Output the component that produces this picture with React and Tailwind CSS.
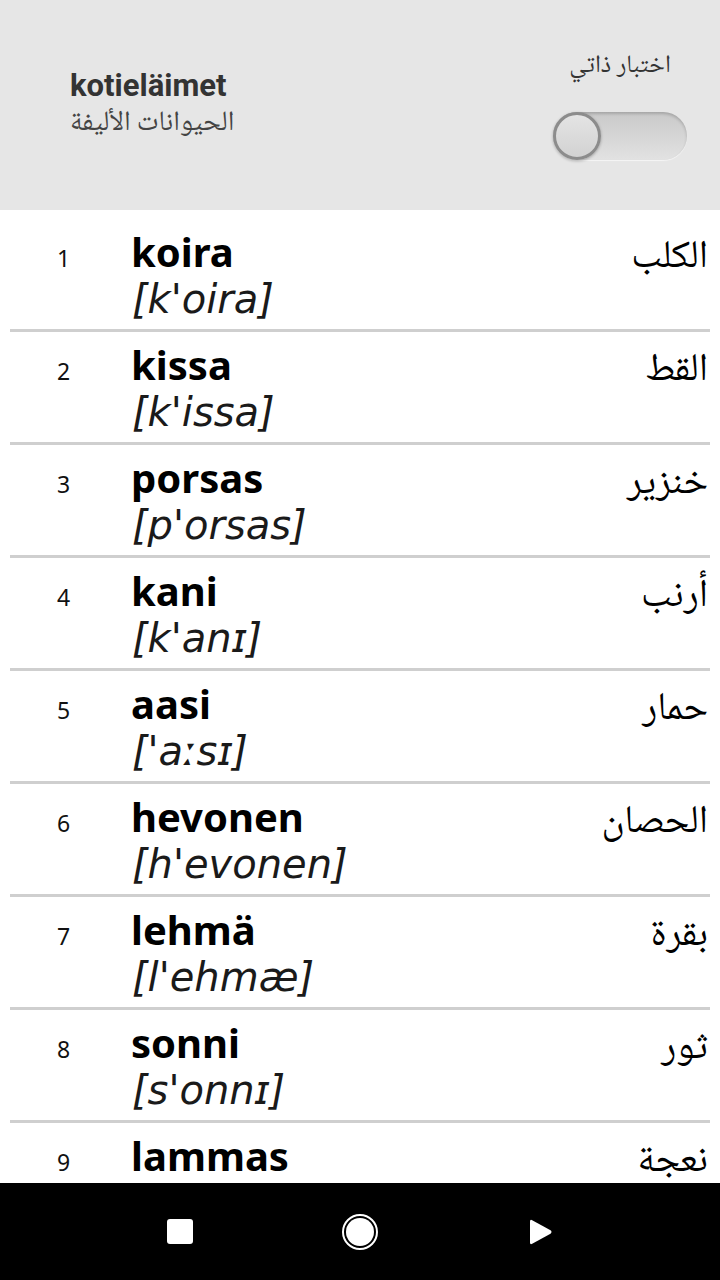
import React from 'react';

const words = [
    { n: 1, fi: 'koira', ipa: "[k'oira]", ar: 'الكلب' },
    { n: 2, fi: 'kissa', ipa: "[k'issa]", ar: 'القط' },
    { n: 3, fi: 'porsas', ipa: "[p'orsas]", ar: 'خنزير' },
    { n: 4, fi: 'kani', ipa: "[k'anɪ]", ar: 'أرنب' },
    { n: 5, fi: 'aasi', ipa: "['aːsɪ]", ar: 'حمار' },
    { n: 6, fi: 'hevonen', ipa: "[h'evonen]", ar: 'الحصان' },
    { n: 7, fi: 'lehmä', ipa: "[l'ehmæ]", ar: 'بقرة' },
    { n: 8, fi: 'sonni', ipa: "[s'onnɪ]", ar: 'ثور' },
    { n: 9, fi: 'lammas', ipa: "[l'ammas]", ar: 'نعجة' },
];

const arabicFont = "font-['Noto_Naskh_Arabic','Noto_Sans_Arabic','DejaVu_Sans',sans-serif]";

const WordRow = ({ item }) => (
    <div className="mx-[10px] border-b-[3px] border-[#cfcfcf] pt-[11px] pb-[8px]">
        <div className="flex h-[44px] items-baseline">
            <span className="w-[121px] pl-[47px] text-[23px] leading-[44px] text-[#111] font-['Noto_Sans',sans-serif]">
                {item.n}
            </span>
            <span className="flex-1 text-[40px] leading-[44px] font-bold text-black font-['Noto_Sans',sans-serif]">
                {item.fi}
            </span>
            <span dir="rtl" className={`pr-[2px] text-[39px] leading-[44px] text-black ${arabicFont}`}>
                {item.ar}
            </span>
        </div>
        <div className="h-[47px] pt-[3px] pl-[122px] text-[40px] leading-[44px] italic text-[#1a1a1a] font-['DejaVu_Sans',sans-serif]">
            {item.ipa}
        </div>
    </div>
);

const Toggle = () => (
    <div className="relative h-[48px] w-[134px] rounded-full bg-gradient-to-b from-[#c9c9c9] to-[#e2e2e2] shadow-[inset_0_2px_3px_rgba(0,0,0,0.18),0_1px_1px_rgba(255,255,255,0.6)]">
        <div className="absolute left-0 top-0 h-[48px] w-[48px] rounded-full border-[3px] border-[#8c8c8c] bg-gradient-to-b from-[#e4e4e4] to-[#d2d2d2] shadow-[0_1px_3px_rgba(0,0,0,0.3)]" />
    </div>
);

const NavBar = () => (
    <div className="flex h-[97px] shrink-0 items-center justify-center bg-black">
        <div className="flex w-[180px] justify-center">
            <div className="h-[25px] w-[26px] rounded-[3px] bg-white" />
        </div>
        <div className="flex w-[180px] justify-center">
            <div className="rounded-full border-2 border-white p-[2px]">
                <div className="h-[28px] w-[28px] rounded-full bg-white" />
            </div>
        </div>
        <div className="flex w-[180px] justify-center">
            <svg width="25" height="28" viewBox="0 0 25 28">
                <path d="M2 3.5 Q2 1 4.2 2.2 L22.5 12.3 Q24.5 14 22.5 15.7 L4.2 25.8 Q2 27 2 24.5 Z" fill="#fff" />
            </svg>
        </div>
    </div>
);

export default function App() {
    return (
        <div className="flex h-[1280px] w-[720px] flex-col overflow-hidden bg-white">
            {/* Header */}
            <div className="flex h-[210px] shrink-0 items-center justify-between bg-[#e6e6e6] pl-[70px] pr-[33px]">
                <div className="flex flex-col">
                    <span className="text-[31px] leading-[38px] font-bold text-[#333] font-['Roboto',sans-serif]">
                        kotieläimet
                    </span>
                    <span dir="rtl" className={`text-left text-[28px] leading-[38px] text-[#444] ${arabicFont}`}>
                        الحيوانات الأليفة
                    </span>
                </div>
                <div className="flex flex-col items-center gap-[30px] pt-[2px]">
                    <span dir="rtl" className={`text-[25px] leading-[30px] text-[#333] ${arabicFont}`}>
                        اختبار ذاتي
                    </span>
                    <Toggle />
                </div>
            </div>

            {/* Word list */}
            <div className="min-h-0 flex-1 overflow-hidden pt-[9px]">
                {words.map((item) => (
                    <WordRow key={item.n} item={item} />
                ))}
            </div>

            <NavBar />
        </div>
    );
}
